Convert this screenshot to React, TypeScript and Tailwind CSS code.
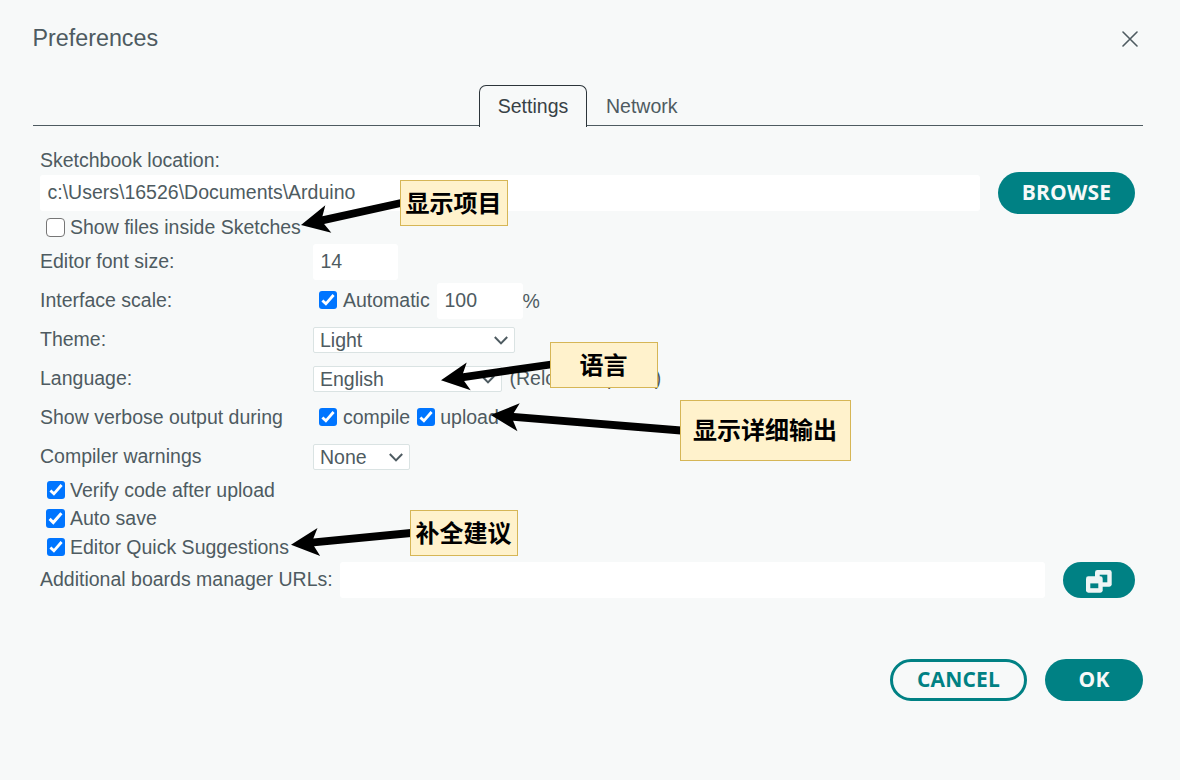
import React from "react";

function Check({ checked = true, big = false }: { checked?: boolean; big?: boolean }) {
  if (!checked) {
    return <span className="box-border h-[19px] w-[19px] shrink-0 rounded-[4px] border-[1.5px] border-[#767676] bg-white" />;
  }
  return (
    <span className={big ? "h-[19px] w-[19px] shrink-0 rounded-[3px] bg-[#0075ff]" : "h-[18px] w-[18px] shrink-0 rounded-[3px] bg-[#0075ff]"}>
      <svg viewBox="0 0 18 18" className="block h-full w-full">
        <path d="M3.4 9.4 L6.9 12.8 L14.6 4" fill="none" stroke="#fff" strokeWidth="2.8" />
      </svg>
    </span>
  );
}

function Select({ value, width }: { value: string; width: string }) {
  return (
    <div className={`${width} flex h-[26px] items-center justify-between rounded-[2px] border border-[#dae3e3] bg-white pr-[6px] pl-[6px]`}>
      <span>{value}</span>
      <svg width="14" height="9" viewBox="0 0 14 9">
        <path d="M0.8 1 L7 7.4 L13.2 1" fill="none" stroke="#4e5b61" strokeWidth="2" />
      </svg>
    </div>
  );
}

function Row({ label, children }: { label: string; children: React.ReactNode }) {
  return (
    <div className="mb-[3px] flex h-[36px] items-center">
      <span className="w-[273px] shrink-0 pb-[2px]">{label}</span>
      {children}
    </div>
  );
}

type Point = [number, number];

function Arrow({ from, tip }: { from: Point; tip: Point }) {
  const dx = from[0] - tip[0];
  const dy = from[1] - tip[1];
  const len = Math.hypot(dx, dy);
  const at = (along: number, side: number) =>
    `${tip[0] + (dx * along - dy * side) / len},${tip[1] + (dy * along + dx * side) / len}`;
  return (
    <polygon
      points={[at(0, 0), at(28, 14), at(22.8, 3.9), at(len, 3.9), at(len, -3.9), at(22.8, -3.9), at(28, -14)].join(" ")}
    />
  );
}

function Note({ text, place }: { text: string; place: string }) {
  return (
    <div className={`${place} absolute flex items-center justify-center border border-[#d6b656] bg-[#fff2cc] pr-px font-['Noto_Sans_CJK_SC',sans-serif] text-[24px] leading-none font-bold whitespace-nowrap text-black`}>
      {text}
    </div>
  );
}

const button = "flex items-center justify-center rounded-full pb-[2px] font-['Open_Sans',sans-serif] text-[21px] font-bold tracking-[0.2px]";

export default function App() {
  return (
    <div className="relative flex h-[780px] w-[1180px] flex-col overflow-hidden bg-[#f7f9f9] pr-[37px] pl-[33px] font-['Liberation_Sans',Arial,sans-serif] text-[19.5px] leading-[22px] whitespace-nowrap text-[#4e5b61]">
      <header className="flex h-[85px] items-start justify-between">
        <h1 className="-ml-[0.5px] pt-[24px] text-[23.3px] leading-[28px]">Preferences</h1>
        <svg width="16" height="16" viewBox="0 0 16 16" className="mt-[31px] mr-[5px]">
          <path d="M1 1 L15 15 M15 1 L1 15" fill="none" stroke="#4e5b61" strokeWidth="1.6" strokeLinecap="round" />
        </svg>
      </header>

      <nav className="flex h-[42px]">
        <div className="mb-px w-[446px] border-b border-[#4e5b61]" />
        <div className="flex w-[108px] justify-center rounded-t-[7px] border border-b-0 border-[#2c353a] pt-[9px] text-[#374146]">Settings</div>
        <div className="mb-px flex-1 border-b border-[#4e5b61] pt-[10px] pl-[19px]">Network</div>
      </nav>

      <main className="flex h-[532px] flex-col pt-[18px] pr-[8px] pl-[7px]">
        <div className="flex h-[30px] items-center pb-px">Sketchbook location:</div>
        <div className="flex h-[36px] items-center gap-[18px]">
          <div className="flex h-[36px] flex-1 items-center rounded-[3px] bg-white pb-[2px] pl-[7.5px]">c:\Users\16526\Documents\Arduino</div>
          <div className={`${button} h-[42px] w-[137px] bg-[#008184] text-[#f7f9f9]`}>BROWSE</div>
        </div>
        <div className="flex h-[33px] items-center gap-[5px] pl-[6px]">
          <Check checked={false} />
          <span className="pb-[2px]">Show files inside Sketches</span>
        </div>

        <Row label="Editor font size:">
          <div className="flex h-[36px] w-[85px] items-center rounded-[3px] bg-white pb-[2px] pl-[7.5px]">14</div>
        </Row>
        <Row label="Interface scale:">
          <div className="flex w-[124px] items-center gap-[6px] pb-[2px] pl-[6px]">
            <Check />
            <span>Automatic</span>
          </div>
          <div className="flex h-[36px] w-[86px] items-center rounded-[3px] bg-white pb-[2px] pl-[7.5px]">100</div>
          <span className="-ml-[0.5px] pb-px">%</span>
        </Row>
        <Row label="Theme:">
          <Select value="Light" width="w-[202px]" />
        </Row>
        <Row label="Language:">
          <Select value="English" width="w-[189px]" />
          <span className="pb-[2px] pl-[7.5px]">(Reload required)</span>
        </Row>
        <Row label="Show verbose output during">
          <div className="flex items-center pb-[2px] pl-[6px]">
            <Check />
            <span className="mr-[7px] ml-[6px]">compile</span>
            <Check />
            <span className="ml-[5px]">upload</span>
          </div>
        </Row>
        <Row label="Compiler warnings">
          <Select value="None" width="w-[97px]" />
        </Row>

        <div className="-mt-[3px] flex h-[87px] flex-col pl-[6px]">
          <div className="flex h-[29px] items-center gap-[5px] pl-px">
            <Check />
            <span>Verify code after upload</span>
          </div>
          <div className="flex h-[28px] items-center gap-[5px]">
            <Check big />
            <span>Auto save</span>
          </div>
          <div className="flex h-[29px] items-center gap-[5px] pl-px">
            <Check />
            <span>Editor Quick Suggestions</span>
          </div>
        </div>

        <div className="flex h-[36px] items-center">
          <span className="w-[300px] pb-[2px]">Additional boards manager URLs:</span>
          <div className="h-[36px] w-[705px] rounded-[3px] bg-white" />
          <div className="ml-[18px] flex h-[36px] w-[72px] items-center justify-center rounded-full bg-[#008184]">
            <svg width="28" height="28" viewBox="0 0 28 28">
              <rect x="10" y="4" width="16.7" height="16.7" rx="2.4" fill="#f0f5f5" />
              <rect x="14.7" y="8.7" width="7.6" height="7.6" fill="#008184" />
              <rect x="1" y="10.3" width="16.7" height="16.4" rx="2.4" fill="#f0f5f5" />
              <rect x="5.3" y="17.4" width="8" height="4.8" fill="#008184" />
            </svg>
          </div>
        </div>
      </main>

      <footer className="flex h-[42px] justify-end gap-[18px]">
        <div className={`${button} w-[137px] border-3 border-[#008184] text-[#008184]`}>CANCEL</div>
        <div className={`${button} w-[98px] bg-[#008184] text-[#f7f9f9]`}>OK</div>
      </footer>

      <svg className="absolute inset-0" width="1180" height="780" viewBox="0 0 1180 780">
        <Arrow from={[401, 203]} tip={[301, 225]} />
        <Arrow from={[551, 364.5]} tip={[441, 380.3]} />
        <Arrow from={[681, 430.5]} tip={[490.7, 415]} />
        <Arrow from={[411, 533]} tip={[291, 544.7]} />
      </svg>
      <Note text="显示项目" place="top-[180px] left-[400px] h-[46px] w-[108px] pb-[2px]" />
      <Note text="语言" place="top-[342px] left-[550px] h-[46px] w-[108px] pb-[2px]" />
      <Note text="显示详细输出" place="top-[400px] left-[680px] h-[61px] w-[171px] pb-[4px]" />
      <Note text="补全建议" place="top-[510px] left-[410px] h-[46px] w-[108px] pb-[2px]" />
    </div>
  );
}
